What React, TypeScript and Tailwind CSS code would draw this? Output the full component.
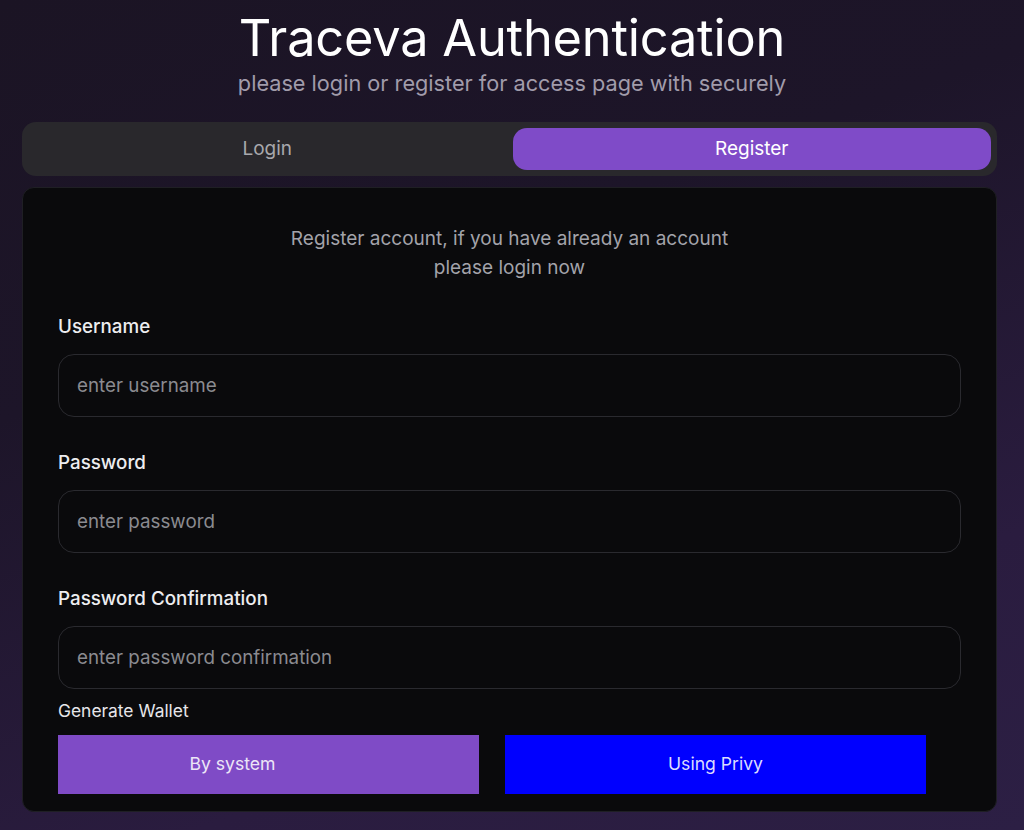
import { useState } from "react";

const font = { fontFamily: "Inter, 'Noto Sans', sans-serif" };

function Field({ label, placeholder, type = "text" }: { label: string; placeholder: string; type?: string }) {
  return (
    <div className="flex flex-col">
      <label className="text-[18.8px] leading-[28px] font-medium text-[#ededf0]">{label}</label>
      <input
        type={type}
        placeholder={placeholder}
        className="mt-[13px] h-[63px] w-[903px] rounded-2xl border border-[#2a2a2f] bg-[#0a0a0c] px-[18px] text-[18.8px] text-white outline-none placeholder:text-[#8b8b90]"
      />
    </div>
  );
}

export default function App() {
  const [tab, setTab] = useState<"login" | "register">("register");

  return (
    <div
      className="min-h-[830px] w-full bg-[linear-gradient(160deg,#1b1424_0%,#1d1529_35%,#2a1c3f_75%,#2c1f44_100%)]"
      style={font}
    >
      {/* Heading */}
      <div className="flex flex-col items-center pt-[7px]">
        <h1 className="text-[50.5px] leading-[61px] text-white tracking-[-0.2px]">Traceva Authentication</h1>
        <p className="text-[21.7px] leading-[30px] text-[#a19cab]">please login or register for access page with securely</p>
      </div>

      <div className="ml-[22px] mt-[24px] w-[975px]">
        {/* Tabs */}
        <div className="grid grid-cols-2 gap-[6px] rounded-[14px] bg-[#29282c] p-[6px]">
          <button
            onClick={() => setTab("login")}
            className={`h-[42px] rounded-[14px] text-[19px] ${tab === "login" ? "bg-[#7f4bc8] text-white" : "text-[#a8a8ad]"}`}
          >
            Login
          </button>
          <button
            onClick={() => setTab("register")}
            className={`h-[42px] rounded-[14px] text-[19px] ${tab === "register" ? "bg-[#7f4bc8] text-white" : "text-[#a8a8ad]"}`}
          >
            Register
          </button>
        </div>

        {/* Card */}
        <div className="mt-[11px] rounded-xl border border-[#1f1f24] bg-[#0a0a0c] px-[35px] pt-[36px] pb-[17px]">
          <p className="text-center text-[19px] leading-[29px] text-[#a3a3aa]">
            Register account, if you have already an account
            <br />
            please login now
          </p>

          <div className="mt-[31px] flex flex-col gap-[32px]">
            <Field label="Username" placeholder="enter username" />
            <Field label="Password" placeholder="enter password" type="password" />
          </div>
          <div className="mt-[32px]">
            <Field label="Password Confirmation" placeholder="enter password confirmation" type="password" />
          </div>

          <p className="mt-[10px] text-[17.4px] leading-[24px] text-[#e6e6ea]">Generate Wallet</p>

          <div className="mt-[12px] flex gap-[26px]">
            <button className="h-[59px] w-[421px] pr-[72px] bg-[#7f4bc6] text-[17.6px] text-[#ece6f7]">By system</button>
            <button className="h-[59px] w-[421px] bg-[#0000ff] text-[17.6px] text-[#dcdcff]">Using Privy</button>
          </div>
        </div>
      </div>
    </div>
  );
}
